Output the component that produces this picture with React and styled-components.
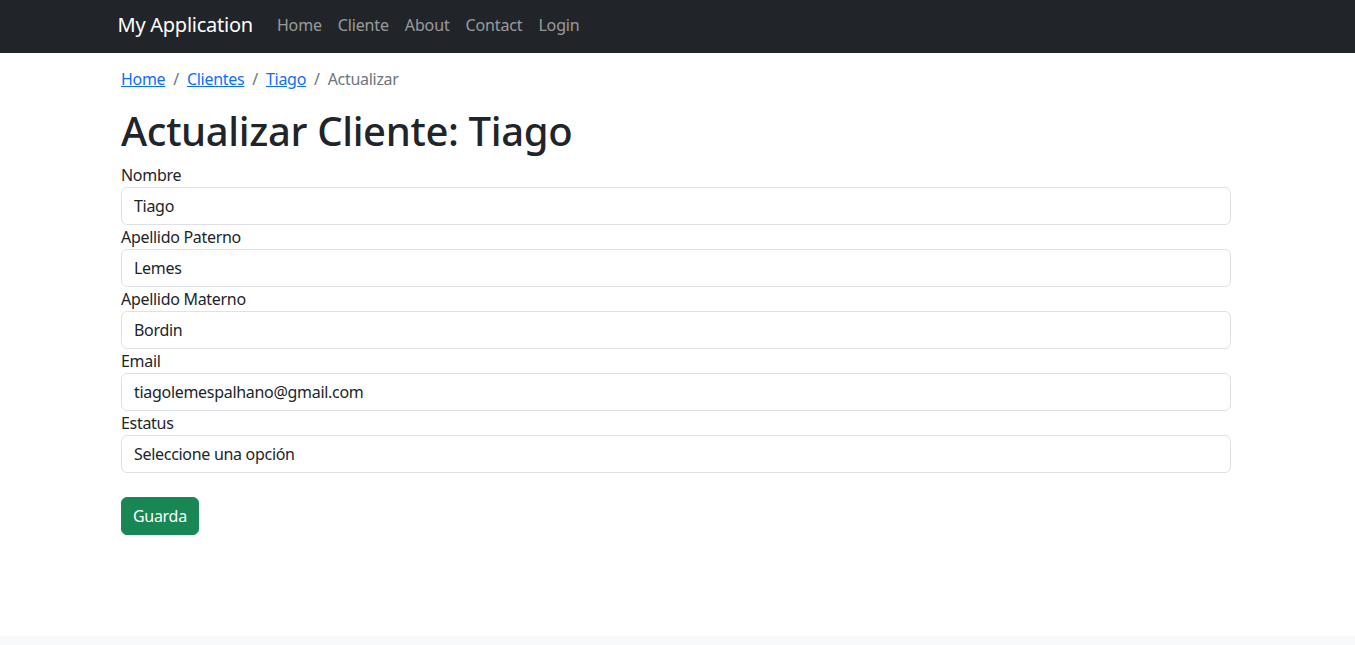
import React from 'react';
import styled, { createGlobalStyle } from 'styled-components';

const GlobalStyle = createGlobalStyle`
  body {
    margin: 0;
    font-family: "Noto Sans", "Open Sans", sans-serif;
    font-size: 16px;
    line-height: 1.5;
    letter-spacing: -0.3px;
    color: #212529;
    background: #fff;
  }
  * { box-sizing: border-box; }
`;

const NavBar = styled.nav`
  background-color: #212529;
  height: 53px;
  display: flex;
  align-items: center;
  padding-bottom: 4px;
`;

const NavContainer = styled.div`
  width: 1120px;
  margin: 0 auto;
  display: flex;
  align-items: center;
`;

const Brand = styled.a`
  color: #fff;
  font-size: 20px;
  letter-spacing: -0.25px;
  margin-right: 16px;
  text-decoration: none;
`;

const NavLink = styled.a`
  color: rgba(255, 255, 255, 0.55);
  padding: 8px;
  letter-spacing: -0.15px;
  text-decoration: none;
`;

const Container = styled.main`
  width: 1113px;
  margin: 0 auto;
  padding: 14px 3px 0 0;
`;

const Crumbs = styled.ol`
  display: flex;
  list-style: none;
  margin: 0 0 16px;
  padding: 0;

  li + li::before {
    content: '/';
    color: #6c757d;
    padding: 0 8px;
    display: inline-block;
  }
`;

const Crumb = styled.li`
  color: ${(p) => (p.$active ? '#6c757d' : '#0d6efd')};

  a {
    color: #0d6efd;
    text-decoration: underline;
  }
`;

const Title = styled.h1`
  font-size: 40px;
  font-weight: 500;
  line-height: 1.2;
  letter-spacing: -0.35px;
  margin: 0 0 8px;
`;

const Form = styled.form`
  display: flex;
  flex-direction: column;
`;

const Label = styled.label`
  display: block;
`;

const Input = styled.input`
  display: block;
  width: 100%;
  height: 38px;
  padding: 6px 12px;
  font: inherit;
  letter-spacing: inherit;
  color: #212529;
  border: 1px solid #dee2e6;
  border-radius: 6px;
  background: #fff;
`;

const SaveButton = styled.button`
  align-self: flex-start;
  margin-top: 24px;
  height: 38px;
  padding: 6px 11px;
  font: inherit;
  letter-spacing: inherit;
  color: #fff;
  background-color: #198754;
  border: 1px solid #198754;
  border-radius: 6px;
`;

const Footer = styled.footer`
  margin-top: 101px;
  height: 20px;
  background-color: #f8f9fa;
`;

const fields = [
  ['Nombre', 'Tiago'],
  ['Apellido Paterno', 'Lemes'],
  ['Apellido Materno', 'Bordin'],
  ['Email', 'tiagolemespalhano@gmail.com'],
  ['Estatus', 'Seleccione una opción'],
];

export default function App() {
  return (
    <>
      <GlobalStyle />
      <NavBar>
        <NavContainer>
          <Brand href="#">My Application</Brand>
          <NavLink href="#">Home</NavLink>
          <NavLink href="#">Cliente</NavLink>
          <NavLink href="#">About</NavLink>
          <NavLink href="#">Contact</NavLink>
          <NavLink href="#">Login</NavLink>
        </NavContainer>
      </NavBar>
      <Container>
        <Crumbs>
          <Crumb><a href="#">Home</a></Crumb>
          <Crumb><a href="#">Clientes</a></Crumb>
          <Crumb><a href="#">Tiago</a></Crumb>
          <Crumb $active>Actualizar</Crumb>
        </Crumbs>
        <Title>Actualizar Cliente: Tiago</Title>
        <Form>
          {fields.map(([label, value]) => (
            <div key={label}>
              <Label>{label}</Label>
              <Input defaultValue={value} />
            </div>
          ))}
          <SaveButton type="button">Guarda</SaveButton>
        </Form>
      </Container>
      <Footer />
    </>
  );
}
